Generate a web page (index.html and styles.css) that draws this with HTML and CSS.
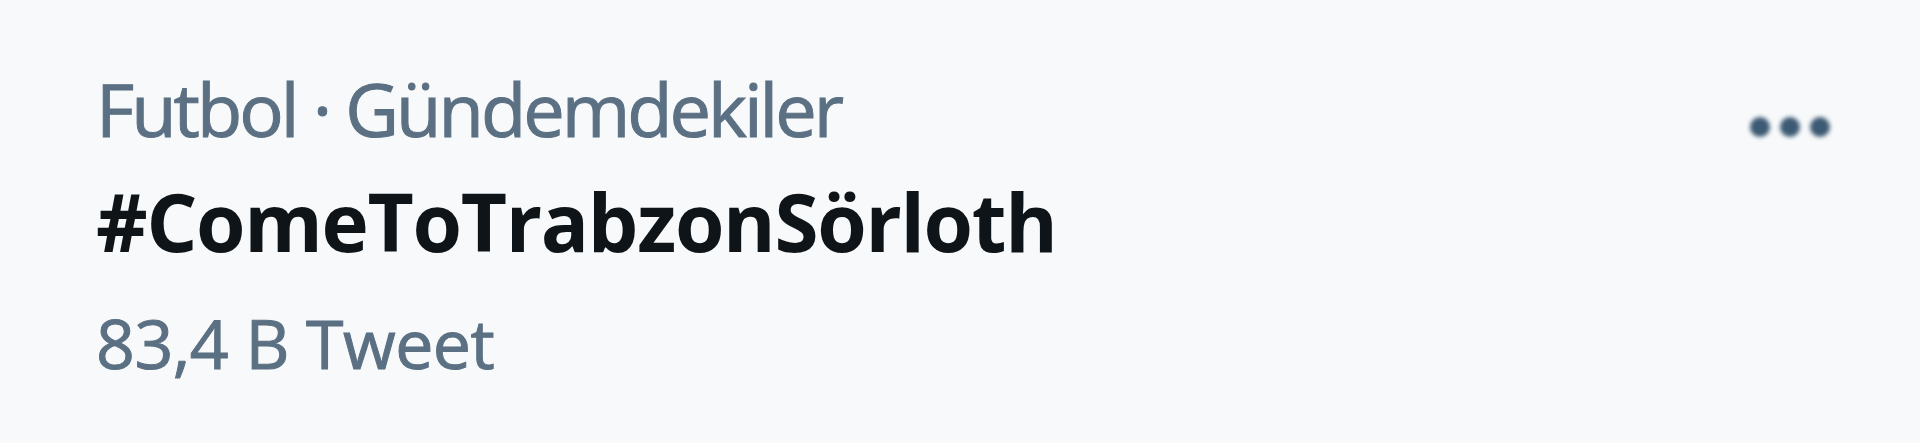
FILE: index.html
```html
<!DOCTYPE html>
<html lang="tr">
<head>
<meta charset="utf-8">
<link rel="stylesheet" href="styles.css">
</head>
<body>
<div class="trend">
  <div class="info">
    <div class="meta">Futbol · Gündemdekiler</div>
    <div class="title">#ComeToTrabzonSörloth</div>
    <div class="count">83,4 B Tweet</div>
  </div>
  <div class="more">
    <svg viewBox="0 0 80 24" width="80" height="24"><circle cx="10" cy="12" r="10"/><circle cx="40" cy="12" r="10"/><circle cx="70" cy="12" r="10"/></svg>
  </div>
</div>
</body>
</html>
```
FILE: styles.css
```css
html, body {
  margin: 0;
  padding: 0;
  background: #f7f9fa;
}
.trend {
  display: flex;
  justify-content: space-between;
  align-items: flex-start;
  padding: 59px 90px 0 96px;
  font-family: "Open Sans", "Noto Sans", sans-serif;
}
.info {
  display: flex;
  flex-direction: column;
  filter: blur(0.6px);
}
.meta {
  font-size: 74px;
  line-height: 100px;
  letter-spacing: -3px;
  color: #5b7083;
  -webkit-text-stroke: 1px #5b7083;
}
.title {
  margin-top: 5px;
  font-size: 80px;
  line-height: 114px;
  font-weight: 700;
  letter-spacing: -1.3px;
  color: #0f1419;
}
.count {
  margin-top: 15px;
  font-size: 68px;
  line-height: 100px;
  letter-spacing: -0.5px;
  color: #5b7083;
  -webkit-text-stroke: 1px #5b7083;
}
.more {
  margin-top: 56px;
  line-height: 0;
  filter: blur(2px);
}
.more svg {
  fill: #3d5a74;
}
```
